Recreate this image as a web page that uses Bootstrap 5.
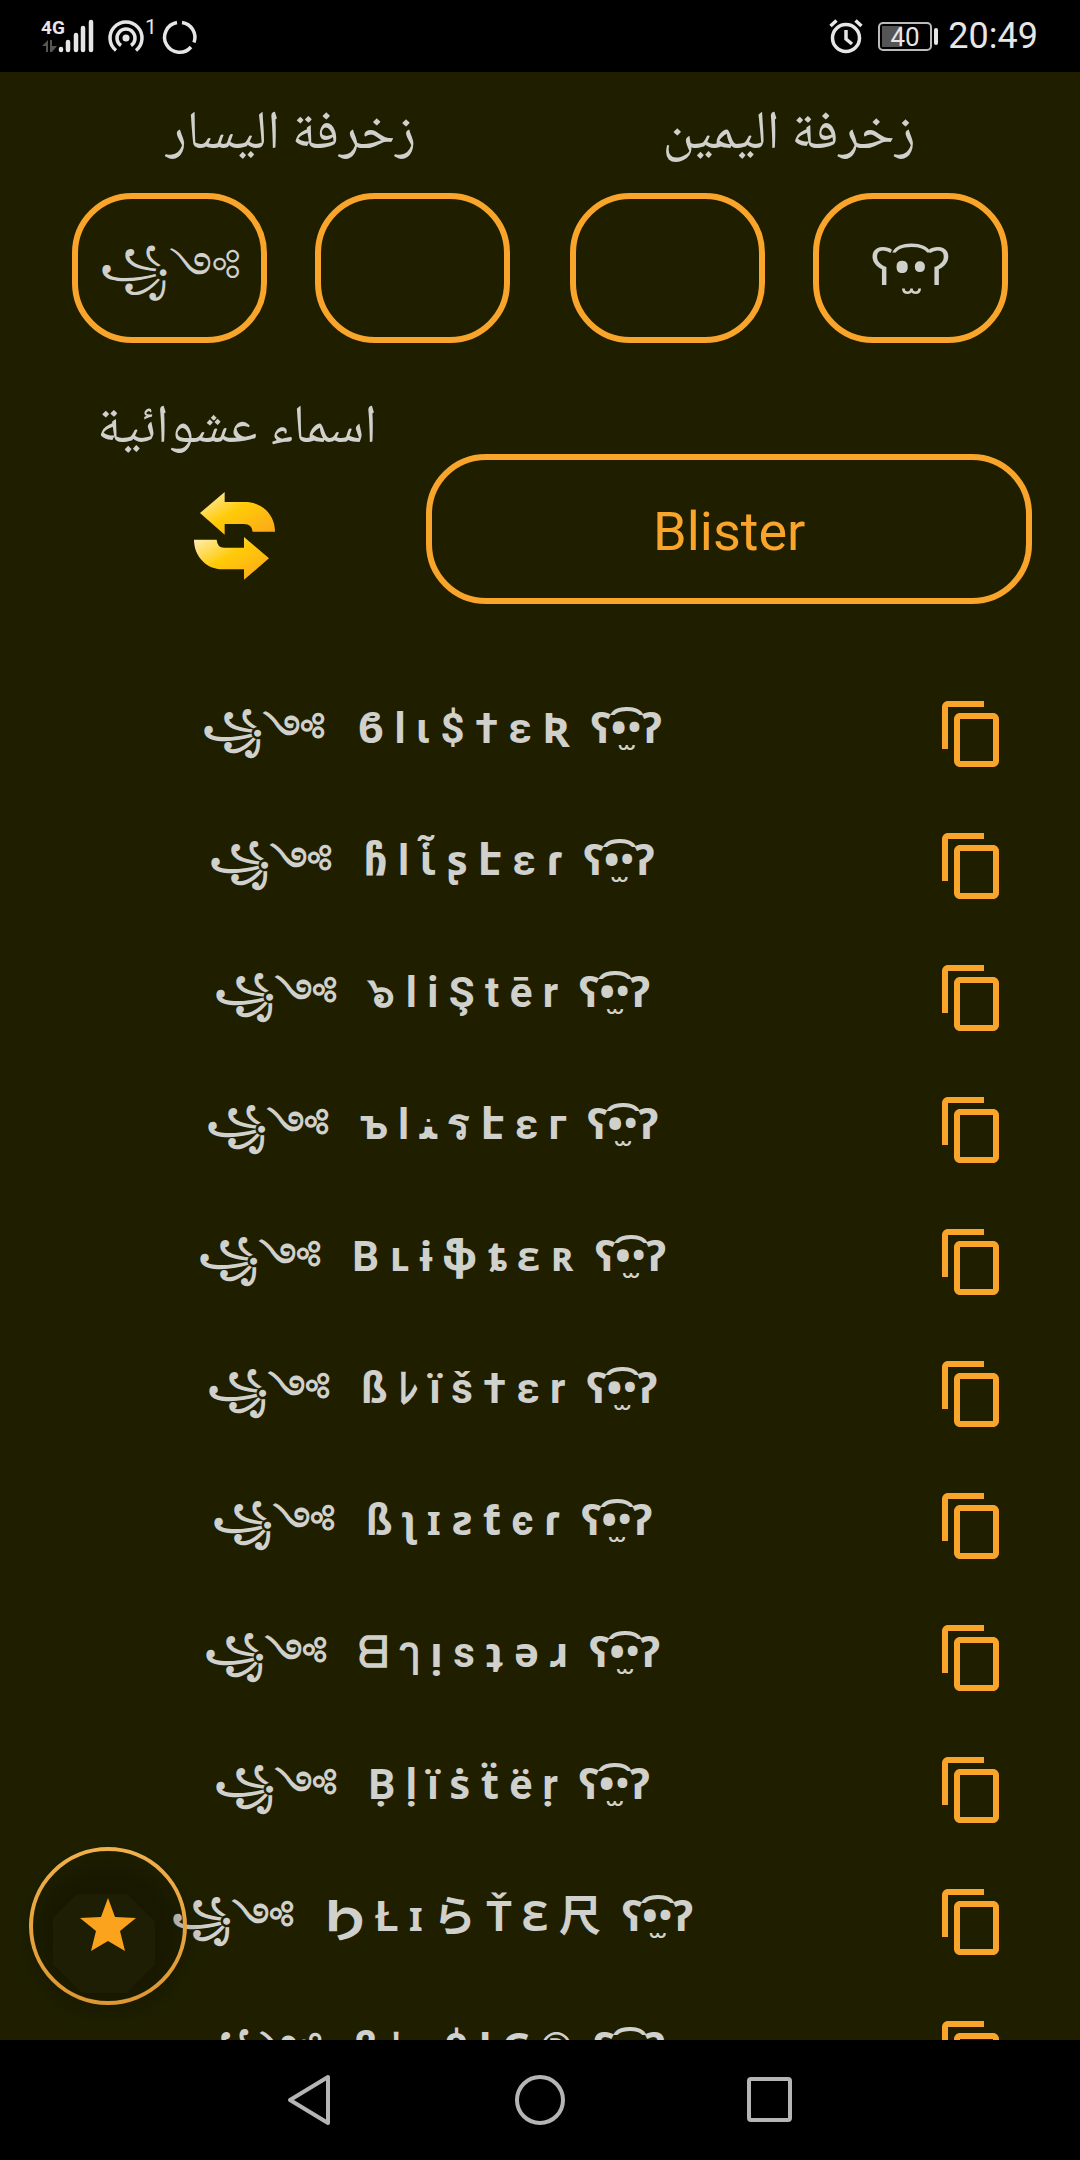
<!DOCTYPE html>
<html lang="ar">
<head>
<meta charset="utf-8">
<meta name="viewport" content="width=device-width, initial-scale=1">
<title>زخرفة الاسماء</title>
<link href="https://cdn.jsdelivr.net/npm/bootstrap@5.3.0/dist/css/bootstrap.min.css" rel="stylesheet">
<style>
  :root { --accent: #f9a42a; --ink: #d0d0cc; --bg: #1f1f00; }
  body { background: #000; color: var(--ink); font-family: Roboto, "Noto Sans", "DejaVu Sans", "Noto Sans CJK JP", sans-serif; }
  .status-bar { height: 72px; padding: 0 42px; color: #e6e6e6; }
  .status-time { font-size: 36px; line-height: 40px; }
  .app-main { background: var(--bg); min-height: 0; }
  .arabic-label { font-family: "Noto Naskh Arabic", "Noto Sans Arabic", "Liberation Sans", serif; font-size: 54px; line-height: 60px; font-weight: 400; }
  .sides { padding: 34px 42px 0; }
  .side { padding: 0 30px; }
  .slots { gap: 48px; margin-top: 27px; }
  .slot, .name-input { height: 150px; border: 6px solid var(--accent); border-radius: 60px; background: transparent; }
  .slot { color: var(--ink); font-size: 50px; line-height: 60px; padding: 0; white-space: nowrap; }
  .slot .ornament { font-size: 45px; }
  .name-row { padding: 57px 48px 0; }
  .name-random { flex: 5 1 0; gap: 28px; padding-bottom: 21px; }
  .name-field { flex: 8 1 0; }
  .name-input { font-size: 54px; color: var(--accent); outline: 0; padding: 4px 0 0; }
  .icon-btn { background: none; border: 0; padding: 0; line-height: 0; color: var(--accent); }
  .names { margin-top: 64px; min-height: 0; }
  .name-item { height: 132px; }
  .name-text { flex: 8 1 0; font-size: 42px; line-height: 48px; font-weight: 700; white-space: pre; padding-bottom: 10px; }
  .name-text .ornament { font-size: 39px; }
  .name-copy { flex: 2 1 0; }
  .fab { left: 29px; bottom: 35px; }
  .nav-bar { height: 120px; }
  .nav-bar .icon-btn { width: 230px; height: 120px; color: #b5b5b5; }
</style>
<script src="https://cdn.jsdelivr.net/npm/bootstrap@5.3.0/dist/js/bootstrap.bundle.min.js"></script>
</head>
<body class="vh-100 d-flex flex-column overflow-hidden">
<svg class="d-none" aria-hidden="true">
  <symbol id="copy" viewBox="0 0 24 24"><path fill="currentColor" d="M16 1H4c-1.100 0-2 .9-2 2v14h2V3h12V1zm3 4H8c-1.100 0-2 .9-2 2v14c0 1.100.9 2 2 2h11c1.100 0 2-.9 2-2V7c0-1.100-.9-2-2-2zm0 16H8V7h11v14z"/></symbol>
</svg>

<header class="status-bar d-flex justify-content-between align-items-center flex-shrink-0" dir="ltr">
  <svg width="156" height="40" viewBox="0 0 156 40" fill="none" stroke="#e6e6e6" overflow="visible" role="img" aria-label="4G">
    <text x="-1" y="18" font-family="Roboto, sans-serif" font-size="19" font-weight="700" fill="#e6e6e6" stroke="none">4G</text>
    <g fill="#555" stroke="none"><path d="M4 36V30H0l6-6v12zM8 24h2v6h5l-5 6H8z"/></g>
    <path stroke-width="4.500" stroke-linecap="round" d="M19 33v1M26 26v8M34 19v15M41 12v22M49 6v28"/>
    <circle cx="84" cy="22" r="3.500" fill="#e6e6e6" stroke="none"/>
    <path stroke-width="3.500" d="M79 29.500a9 9 0 1 1 10 0M74 34.500a16 16 0 1 1 20 0"/>
    <text x="103" y="18" font-family="Roboto, sans-serif" font-size="21" fill="#e6e6e6" stroke="none">1</text>
    <path stroke-width="3.500" d="M140 6.500a15 15 0 0 1 12 20M149 31a15 15 0 1 1-14-24.500"/>
  </svg>
  <div class="d-flex align-items-center">
    <svg width="112" height="40" viewBox="0 0 112 40" fill="none" stroke="#e6e6e6" role="img" aria-label="40%">
      <circle cx="18" cy="22" r="13.500" stroke-width="3.500"/>
      <path stroke-width="3.500" d="M18 14v9l6 5M2.500 10l6-5.500M33.500 10l-6-5.500"/>
      <rect x="51" y="7" width="52" height="27" rx="4" stroke="#bbb" stroke-width="2"/>
      <rect x="54" y="10" width="20" height="21" fill="#555" stroke="none"/>
      <text x="77" y="30" text-anchor="middle" font-family="Roboto, sans-serif" font-size="26" fill="#e6e6e6" stroke="none">40</text>
      <path stroke-width="4" stroke-linecap="round" d="M108 14v13"/>
    </svg>
    <time class="status-time ms-2">20:49</time>
  </div>
</header>

<main class="app-main position-relative flex-grow-1 d-flex flex-column overflow-hidden" dir="ltr">
  <section class="sides d-flex flex-shrink-0">
    <div class="side w-50">
      <h2 class="arabic-label text-center m-0" dir="rtl">زخرفة اليسار</h2>
      <div class="slots d-flex">
        <button class="slot col" type="button"><span class="ornament">꧁༺</span></button>
        <button class="slot col" type="button" aria-label="اليسار 2"></button>
      </div>
    </div>
    <div class="side w-50">
      <h2 class="arabic-label text-center m-0" dir="rtl">زخرفة اليمين</h2>
      <div class="slots d-flex">
        <button class="slot col" type="button" aria-label="اليمين 1"></button>
        <button class="slot col" type="button">ʕ•̫͡•ʔ</button>
      </div>
    </div>
  </section>

  <section class="name-row d-flex align-items-end flex-shrink-0">
    <div class="name-random d-flex flex-column align-items-center">
      <label class="arabic-label" for="name" dir="rtl">اسماء عشوائية</label>
      <button class="icon-btn" type="button" aria-label="اسماء عشوائية">
        <svg width="90" height="95" viewBox="396 325 270 285">
          <defs><linearGradient id="gold" x1="0" y1="0" x2="1" y2="1"><stop offset="0" stop-color="#fff0c0"/><stop offset=".45" stop-color="#ffcb08"/><stop offset="1" stop-color="#fba51c"/></linearGradient></defs>
          <path fill="url(#gold)" d="M420 400L494 337V367H555C605 367 645 404 645 456H578Q576 433 552 433H494V465Z"/>
          <path fill="url(#gold)" d="M402 480H470Q472 504 492 504H552V472L627 536L552 600V569H488C440 569 402 530 402 480Z"/>
        </svg>
      </button>
    </div>
    <div class="name-field"><input class="name-input w-100 text-center" id="name" type="text" value="Blister"></div>
  </section>

  <ul class="names list-unstyled mb-0 flex-grow-1 overflow-hidden">
    <li class="name-item d-flex align-items-center"><span class="name-text text-center"><span class="ornament">꧁༺</span>   ϐ l ι $ † ε Ʀ  ʕ•̫͡•ʔ</span><span class="name-copy text-center"><button class="icon-btn" type="button" aria-label="نسخ"><svg width="72" height="72"><use href="#copy"/></svg></button></span></li>
    <li class="name-item d-flex align-items-center"><span class="name-text text-center"><span class="ornament">꧁༺</span>   ჩ l ἷ ʂ է ε ɾ  ʕ•̫͡•ʔ</span><span class="name-copy text-center"><button class="icon-btn" type="button" aria-label="نسخ"><svg width="72" height="72"><use href="#copy"/></svg></button></span></li>
    <li class="name-item d-flex align-items-center"><span class="name-text text-center"><span class="ornament">꧁༺</span>   ๖ l i Ş t ē r  ʕ•̫͡•ʔ</span><span class="name-copy text-center"><button class="icon-btn" type="button" aria-label="نسخ"><svg width="72" height="72"><use href="#copy"/></svg></button></span></li>
    <li class="name-item d-flex align-items-center"><span class="name-text text-center"><span class="ornament">꧁༺</span>   ъ l ﻨ ร է ε г  ʕ•̫͡•ʔ</span><span class="name-copy text-center"><button class="icon-btn" type="button" aria-label="نسخ"><svg width="72" height="72"><use href="#copy"/></svg></button></span></li>
    <li class="name-item d-flex align-items-center"><span class="name-text text-center"><span class="ornament">꧁༺</span>   B ʟ ɨ ֆ ȶ ɛ ʀ  ʕ•̫͡•ʔ</span><span class="name-copy text-center"><button class="icon-btn" type="button" aria-label="نسخ"><svg width="72" height="72"><use href="#copy"/></svg></button></span></li>
    <li class="name-item d-flex align-items-center"><span class="name-text text-center"><span class="ornament">꧁༺</span>   ß ﾚ ï š † ε r  ʕ•̫͡•ʔ</span><span class="name-copy text-center"><button class="icon-btn" type="button" aria-label="نسخ"><svg width="72" height="72"><use href="#copy"/></svg></button></span></li>
    <li class="name-item d-flex align-items-center"><span class="name-text text-center"><span class="ornament">꧁༺</span>   ß ʅ ɪ ƨ ƭ є ɾ  ʕ•̫͡•ʔ</span><span class="name-copy text-center"><button class="icon-btn" type="button" aria-label="نسخ"><svg width="72" height="72"><use href="#copy"/></svg></button></span></li>
    <li class="name-item d-flex align-items-center"><span class="name-text text-center"><span class="ornament">꧁༺</span>   ᗺ ๅ ᴉ s ʇ ǝ ɹ  ʕ•̫͡•ʔ</span><span class="name-copy text-center"><button class="icon-btn" type="button" aria-label="نسخ"><svg width="72" height="72"><use href="#copy"/></svg></button></span></li>
    <li class="name-item d-flex align-items-center"><span class="name-text text-center"><span class="ornament">꧁༺</span>   Ḅ ḷ ï ṡ ẗ ë ṛ  ʕ•̫͡•ʔ</span><span class="name-copy text-center"><button class="icon-btn" type="button" aria-label="نسخ"><svg width="72" height="72"><use href="#copy"/></svg></button></span></li>
    <li class="name-item d-flex align-items-center"><span class="name-text text-center"><span class="ornament">꧁༺</span>   Ϧ Ł ɪ ら Ť Ɛ 尺  ʕ•̫͡•ʔ</span><span class="name-copy text-center"><button class="icon-btn" type="button" aria-label="نسخ"><svg width="72" height="72"><use href="#copy"/></svg></button></span></li>
    <li class="name-item d-flex align-items-center"><span class="name-text text-center"><span class="ornament">꧁༺</span>   ß ﾚ ı $ ƚ Ϛ ®  ʕ•̫͡•ʔ</span><span class="name-copy text-center"><button class="icon-btn" type="button" aria-label="نسخ"><svg width="72" height="72"><use href="#copy"/></svg></button></span></li>
  </ul>

  <button class="fab icon-btn position-absolute rounded-circle" type="button" aria-label="المفضلة">
    <svg width="158" height="158" viewBox="0 0 158 158" overflow="visible">
      <defs>
        <linearGradient id="ring" x2="0" y2="1"><stop stop-color="#f0b04c"/><stop offset="1" stop-color="#dd9833"/></linearGradient>
        <radialGradient id="shade" cx=".5" cy=".5" r=".5"><stop offset=".6" stop-color="#000" stop-opacity=".22"/><stop offset="1" stop-color="#000" stop-opacity="0"/></radialGradient>
      </defs>
      <circle cx="79" cy="88" r="98" fill="url(#shade)"/>
      <path fill="#1e1e05" d="M48 47h50l28 28v42l-28 29H54L24 118V71z"/>
      <circle cx="79" cy="79" r="77" fill="none" stroke="url(#ring)" stroke-width="4"/>
      <path fill="#fba31c" d="M79 51L86 70L107 71L91 84L96 104L79 94L62 104L67 84L51 71L72 70Z"/>
    </svg>
  </button>
</main>

<nav class="nav-bar d-flex justify-content-center flex-shrink-0" dir="ltr" aria-label="النظام">
  <button class="icon-btn" type="button" aria-label="رجوع"><svg width="50" height="54" viewBox="0 0 50 54" fill="none" stroke="currentColor" stroke-width="4" stroke-linejoin="round"><path d="M5 27L43 4V50Z"/></svg></button>
  <button class="icon-btn" type="button" aria-label="الرئيسية"><svg width="54" height="54" viewBox="0 0 54 54" fill="none" stroke="currentColor" stroke-width="4"><circle cx="27" cy="27" r="23"/></svg></button>
  <button class="icon-btn" type="button" aria-label="الأخيرة"><svg width="50" height="54" viewBox="0 0 50 54" fill="none" stroke="currentColor" stroke-width="4"><rect x="4" y="6" width="41" height="41" rx="2"/></svg></button>
</nav>
</body>
</html>
